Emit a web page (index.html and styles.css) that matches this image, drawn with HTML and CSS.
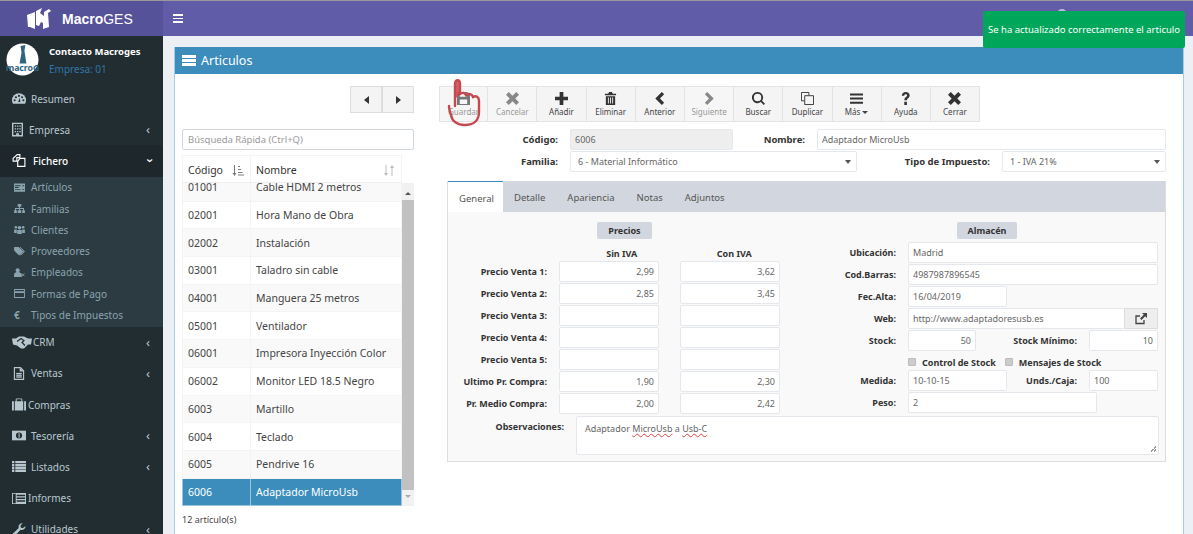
FILE: index.html
```html
<!DOCTYPE html>
<html lang="es">
<head>
    <title>MacroGES - Articulos</title>
    <meta charset="UTF-8">
    <link rel="stylesheet" href="styles.css">
</head>
<body>
    <div class="top-line"></div>
    <header class="topbar">
        <div class="brand">
            <svg class="brand-logo" viewBox="0 0 24 22"><path d="M0 7 L8 4 L8 21 L3 19 L1 19 Z M9 3 L15 0 L13 5 L17 8 L17 4 L22 1 L24 3 L21 5 L22 19 L16 21 L16 15 L14 14 L12 18 L9 17 Z" fill="#fff"/></svg>
            <span class="brand-name"><b>Macro</b>GES</span>
        </div>
        <div class="hamburger"><i></i><i></i><i></i></div>
        <div class="top-avatar"></div>
    </header>

    <div class="toast">Se ha actualizado correctamente el articulo</div>

    <div class="layout">
        <aside class="sidebar">
            <div class="user-panel">
                <div class="avatar">
                    <svg viewBox="0 0 34 34"><circle cx="17" cy="17" r="16.5" fill="#fff"/><path d="M15 3 L20 2 L19 8 L21 21 L14 21 L16 10 Z" fill="#2f6380"/><text x="17" y="29" text-anchor="middle" class="avatar-text">macroG</text></svg>
                </div>
                <div class="user-info">
                    <div class="user-name">Contacto Macroges</div>
                    <div class="user-company">Empresa: 01</div>
                </div>
            </div>
            <nav>
                <a class="nav-item"><svg class="nav-icon" viewBox="0 0 16 12"><path d="M8 0a8 8 0 0 0-8 8c0 1.500.4 2.800 1 4h14c.6-1.200 1-2.500 1-4a8 8 0 0 0-8-8z" fill="#b8c7ce"/><g fill="#222d32"><circle cx="3" cy="8" r="1.200"/><circle cx="4.500" cy="4.500" r="1.200"/><circle cx="8" cy="3" r="1.200"/><circle cx="11.500" cy="4.500" r="1.200"/><circle cx="13" cy="8" r="1.200"/><path d="M7 10l2-5 .5 5z"/></g></svg>Resumen</a>
                <a class="nav-item has-sub"><svg class="nav-icon building" viewBox="0 0 12 15"><path d="M0 0h12v15H0z M1.500 1.500v12h3v-2h3v2h3v-12z" fill="#b8c7ce" fill-rule="evenodd"/><path d="M3 3h1.500v1.500H3zM5.500 3H7v1.500H5.500zM8 3h1.500v1.500H8zM3 6h1.500v1.500H3zM5.500 6H7v1.500H5.500zM8 6h1.500v1.500H8zM3 9h1.500v1.500H3zM5.500 9H7v1.500H5.500zM8 9h1.500v1.500H8z" fill="#b8c7ce"/></svg>Empresa<span class="caret">&#8249;</span></a>
                <a class="nav-item active has-sub"><svg class="nav-icon" viewBox="0 0 15 15"><path d="M5.500.7h3v3.500h-3.500v4H.7V5z M8.500 5h5.800v9.300H6V8.500z" fill="none" stroke="#fff" stroke-width="1.300"/></svg>Fichero<span class="caret open">&#8249;</span></a>
                <div class="submenu">
                    <a class="sub-item"><svg class="sub-icon" viewBox="0 0 12 9"><path d="M0 0h12v9H0z M1 2v1h6V2z M1 4v1h4V4z M1 6v1h6V6z M9 2v1h2V2z M9 6v1h2V6z" fill="#8aa4af" fill-rule="evenodd"/></svg>Artículos</a>
                    <a class="sub-item"><svg class="sub-icon" viewBox="0 0 12 10"><path d="M4 0h4v3H6.500v1.500H11V7h1v3H9V7h1V5.500H6.500V7H8v3H4V7h1.500V5.500H2V7h1v3H0V7h1V4.500h4.500V3H4z" fill="#8aa4af"/></svg>Familias</a>
                    <a class="sub-item"><svg class="sub-icon" viewBox="0 0 12 10"><circle cx="6" cy="3" r="2" fill="#8aa4af"/><circle cx="2" cy="2.500" r="1.500" fill="#8aa4af"/><circle cx="10" cy="2.500" r="1.500" fill="#8aa4af"/><path d="M0 5h3v4H0zM9 5h3v4H9zM3.500 5.500h5V10h-5z" fill="#8aa4af"/></svg>Clientes</a>
                    <a class="sub-item"><svg class="sub-icon" viewBox="0 0 12 10"><path d="M0 0h5l5 5-4.500 4.500L0 4z M7 0l5 5-4.500 4.500-.8-.8L10.500 5 6 0z" fill="#8aa4af"/></svg>Proveedores</a>
                    <a class="sub-item"><svg class="sub-icon" viewBox="0 0 12 10"><circle cx="4" cy="2.500" r="2.300" fill="#8aa4af"/><path d="M0 10V7l2-2h4l2 2v3zM8.500 6l3 3M11.500 6l-3 3" fill="#8aa4af" stroke="#8aa4af"/></svg>Empleados</a>
                    <a class="sub-item"><svg class="sub-icon" viewBox="0 0 12 10"><path d="M0 0h12v10H0z M1 1v1.500h10V1z M1 4.500V9h10V4.500z" fill="#8aa4af" fill-rule="evenodd"/></svg>Formas de Pago</a>
                    <a class="sub-item"><span class="sub-glyph">€</span>Tipos de Impuestos</a>
                </div>
                <a class="nav-item has-sub tight"><svg class="nav-icon wide" viewBox="0 0 20 12"><path d="M0 2h4l3-2h5l4 2h4l-1 6h-3l-4 4H9L5 9 1 8z" fill="#b8c7ce"/><path d="M5 5l4-3 3 2-2 2 3 3" fill="none" stroke="#222d32" stroke-width="1.200"/></svg>CRM<span class="caret">&#8249;</span></a>
                <a class="nav-item has-sub"><svg class="nav-icon" viewBox="0 0 12 15"><path d="M.7.7h7l3.600 3.600v10H.7z" fill="none" stroke="#b8c7ce" stroke-width="1.300"/><path d="M7 1v4h4M3 7h6v1H3zM3 9h6v1H3zM3 11h6v1H3z" fill="#b8c7ce" stroke="#b8c7ce" stroke-width=".4"/></svg>Ventas<span class="caret">&#8249;</span></a>
                <a class="nav-item compact"><svg class="nav-icon" viewBox="0 0 15 13"><path d="M0 3h2v10H0zM3 3h1V1a1 1 0 0 1 1-1h5a1 1 0 0 1 1 1v2h1v10H3zM5 3h5V1H5zM13 3h2v10h-2z" fill="#b8c7ce" fill-rule="evenodd"/></svg>Compras</a>
                <a class="nav-item has-sub"><svg class="nav-icon" viewBox="0 0 16 11"><path d="M0 0h16v11H0z" fill="#b8c7ce"/><circle cx="8" cy="5.500" r="3.500" fill="#222d32"/><path d="M7.500 3h1.200v5H7.500z" fill="#b8c7ce"/></svg>Tesorería<span class="caret">&#8249;</span></a>
                <a class="nav-item has-sub"><svg class="nav-icon" viewBox="0 0 15 12"><path d="M0 0h2.500v2.500H0zM3.500 0H15v2.500H3.500zM0 3.200h2.500v2.500H0zM3.500 3.200H15v2.500H3.500zM0 6.400h2.500v2.500H0zM3.500 6.400H15v2.500H3.500zM0 9.500h2.500V12H0zM3.500 9.500H15V12H3.500z" fill="#b8c7ce"/></svg>Listados<span class="caret">&#8249;</span></a>
                <a class="nav-item compact"><svg class="nav-icon" viewBox="0 0 15 12"><path d="M0 0h15v12H0z M1 1v10h3V1z M5 2v1.500h9V2z M5 5v1.500h9V5z M5 8v1.500h9V8z" fill="#b8c7ce" fill-rule="evenodd"/></svg>Informes</a>
                <a class="nav-item has-sub"><svg class="nav-icon" viewBox="0 0 14 14"><path d="M14 3.500a4 4 0 0 1-5.300 3.800L2.800 13.500a1.500 1.500 0 0 1-2.200-2.200l6.100-6A4 4 0 0 1 11 .2L8.500 2.700l.5 2.300 2.300.5 2.500-2z" fill="#b8c7ce"/></svg>Utilidades<span class="caret">&#8249;</span></a>
            </nav>
        </aside>

        <main class="content">
            <section class="box">
                <div class="box-header">
                    <svg class="box-icon" viewBox="0 0 14 11"><path d="M0 0h14v3H0zM0 4h14v3H0zM0 8h14v3H0z" fill="#fff"/></svg>
                    <span>Articulos</span>
                </div>
                <div class="box-body">
                    <div class="list-col">
                        <div class="pager">
                            <button class="pager-btn"><i class="arrow-left"></i></button>
                            <button class="pager-btn"><i class="arrow-right"></i></button>
                        </div>
                        <input class="search" placeholder="Búsqueda Rápida (Ctrl+Q)">
                        <div class="list-head">
                            <div class="th th-code">Código
                                <svg class="sort-icon" viewBox="0 0 12 11"><path d="M2 0h1v8h1.500l-2 3-2-3H2zM6 1h2v1H6zM6 4h3v1H6zM6 7h4.500v1H6zM6 9.500h6v1H6z" fill="#777"/></svg>
                            </div>
                            <div class="th th-name">Nombre
                                <svg class="sort-icon faint" viewBox="0 0 12 11"><path d="M2.500 0h1v8H5l-2 3-2-3h1.500zM8.500 11h1V3H11L9 0 7 3h1.500z" fill="#bbb"/></svg>
                            </div>
                        </div>
                        <div class="list-wrap">
                            <div class="list-scroll">
                                <table class="list">
                                    <tr><td>01001</td><td>Cable HDMI 2 metros</td></tr>
                                    <tr><td>02001</td><td>Hora Mano de Obra</td></tr>
                                    <tr><td>02002</td><td>Instalación</td></tr>
                                    <tr><td>03001</td><td>Taladro sin cable</td></tr>
                                    <tr><td>04001</td><td>Manguera 25 metros</td></tr>
                                    <tr><td>05001</td><td>Ventilador</td></tr>
                                    <tr><td>06001</td><td>Impresora Inyección Color</td></tr>
                                    <tr><td>06002</td><td>Monitor LED 18.5 Negro</td></tr>
                                    <tr><td>6003</td><td>Martillo</td></tr>
                                    <tr><td>6004</td><td>Teclado</td></tr>
                                    <tr><td>6005</td><td>Pendrive 16</td></tr>
                                    <tr class="selected"><td>6006</td><td>Adaptador MicroUsb</td></tr>
                                </table>
                            </div>
                            <div class="scrollbar">
                                <i class="scroll-up"></i>
                                <div class="scroll-thumb"></div>
                                <i class="scroll-down"></i>
                            </div>
                        </div>
                        <div class="list-count">12 artículo(s)</div>
                    </div>

                    <div class="detail-col">
                        <div class="toolbar">
                            <button class="tool off"><svg viewBox="0 0 14 14"><path d="M0 0h11l3 3v11H0zM3 1v4h7V1zM3 8v5h8V8z" fill="#777" fill-rule="evenodd"/></svg>Guardar</button>
                            <button class="tool off"><svg viewBox="0 0 14 14"><path d="M2 5L0 3l3-3 4 4 4-4 3 3-4 4 4 4-3 3-4-4-4 4-3-3 4-4z" fill="#888"/></svg>Cancelar</button>
                            <button class="tool"><svg viewBox="0 0 14 14"><path d="M5 0h4v5h5v4H9v5H5V9H0V5h5z" fill="#333"/></svg>Añadir</button>
                            <button class="tool"><svg viewBox="0 0 14 14"><path d="M1 2h3.500l1-2h3l1 2H13v1.500H1zM2 4.500h10V14H2zM4.200 6v6.500h1V6zM6.500 6v6.500h1V6zM8.800 6v6.500h1V6z" fill="#333" fill-rule="evenodd"/></svg>Eliminar</button>
                            <button class="tool"><svg viewBox="0 0 14 14"><path d="M9.500 0L12 2.500 7.500 7l4.500 4.500L9.500 14l-7-7z" fill="#333"/></svg>Anterior</button>
                            <button class="tool off"><svg viewBox="0 0 14 14"><path d="M4.500 0L2 2.500 6.500 7 2 11.500 4.500 14l7-7z" fill="#888"/></svg>Siguiente</button>
                            <button class="tool"><svg viewBox="0 0 14 14"><path d="M6 0a6 6 0 0 1 4.800 9.500L14 12.600 12.600 14l-3.100-3.200A6 6 0 1 1 6 0zm0 2a4 4 0 1 0 0 8 4 4 0 0 0 0-8z" fill="#333"/></svg>Buscar</button>
                            <button class="tool"><svg viewBox="0 0 14 14"><path d="M.5.500h8v3M.5.500v9h3M4 4h9.500v9.500H4z" fill="none" stroke="#333"/></svg>Duplicar</button>
                            <button class="tool"><svg viewBox="0 0 14 14"><path d="M0 1.500h14v2.200H0zM0 6h14v2.200H0zM0 10.500h14v2.200H0z" fill="#333"/></svg><span>Más<i class="mini-caret"></i></span></button>
                            <button class="tool"><svg viewBox="0 0 14 14"><path d="M3 4c0-2.500 2-4 4.300-4C9.600 0 11.500 1.500 11.500 3.800c0 2.800-3 3-3 5.200H5.700c0-3.500 3-3.600 3-5.200 0-.8-.6-1.300-1.500-1.300-.9 0-1.500.6-1.600 1.500zM5.700 10.500h2.800V14H5.700z" fill="#333"/></svg>Ayuda</button>
                            <button class="tool"><svg viewBox="0 0 14 14"><path d="M2 5L0 3l3-3 4 4 4-4 3 3-4 4 4 4-3 3-4-4-4 4-3-3 4-4z" fill="#333"/></svg>Cerrar</button>
                        </div>

                        <div class="head-form">
                            <div class="head-row">
                                <label class="head-label">Código:</label>
                                <input class="field code readonly" value="6006" readonly>
                                <label class="head-label short">Nombre:</label>
                                <input class="field grow" value="Adaptador MicroUsb">
                            </div>
                            <div class="head-row">
                                <label class="head-label">Familia:</label>
                                <div class="field fake-select family">6 - Material Informático</div>
                                <label class="head-label tax">Tipo de Impuesto:</label>
                                <div class="field fake-select grow">1 - IVA 21%</div>
                            </div>
                        </div>

                        <div class="tabs">
                            <div class="tab-bar">
                                <a class="tab active">General</a>
                                <a class="tab">Detalle</a>
                                <a class="tab">Apariencia</a>
                                <a class="tab">Notas</a>
                                <a class="tab">Adjuntos</a>
                            </div>
                            <div class="tab-body">
                                <div class="tab-columns">
                                    <div class="prices">
                                        <div class="badge-row"><span class="badge precios">Precios</span></div>
                                        <div class="price-head"><span>Sin IVA</span><span>Con IVA</span></div>
                                        <div class="price-row"><label>Precio Venta 1:</label><input class="field num" value="2,99"><input class="field num" value="3,62"></div>
                                        <div class="price-row"><label>Precio Venta 2:</label><input class="field num" value="2,85"><input class="field num" value="3,45"></div>
                                        <div class="price-row"><label>Precio Venta 3:</label><input class="field num"><input class="field num"></div>
                                        <div class="price-row"><label>Precio Venta 4:</label><input class="field num"><input class="field num"></div>
                                        <div class="price-row"><label>Precio Venta 5:</label><input class="field num"><input class="field num"></div>
                                        <div class="price-row"><label>Ultimo Pr. Compra:</label><input class="field num" value="1,90"><input class="field num" value="2,30"></div>
                                        <div class="price-row"><label>Pr. Medio Compra:</label><input class="field num" value="2,00"><input class="field num" value="2,42"></div>
                                    </div>
                                    <div class="stock">
                                        <div class="badge-row"><span class="badge almacen">Almacén</span></div>
                                        <div class="stock-row"><label>Ubicación:</label><input class="field full" value="Madrid"></div>
                                        <div class="stock-row"><label>Cod.Barras:</label><input class="field full" value="4987987896545"></div>
                                        <div class="stock-row"><label>Fec.Alta:</label><input class="field mid" value="16/04/2019"></div>
                                        <div class="stock-row"><label>Web:</label><input class="field web" value="http://www.adaptadoresusb.es"><button class="web-btn"><svg viewBox="0 0 12 12"><path d="M9 7v3.500H1V3h4" fill="none" stroke="#444" stroke-width="1.300"/><path d="M7 0h5v5l-1.800-1.800L6.500 7 5 5.500l3.800-3.700z" fill="#444"/></svg></button></div>
                                        <div class="stock-row"><label>Stock:</label><input class="field small num" value="50"><label class="side-label">Stock Mínimo:</label><input class="field side num" value="10"></div>
                                        <div class="check-row"><i class="check"></i><span class="check-one">Control de Stock</span><i class="check"></i><span>Mensajes de Stock</span></div>
                                        <div class="stock-row"><label>Medida:</label><input class="field mid" value="10-10-15"><label class="side-label after-mid">Unds./Caja:</label><input class="field side" value="100"></div>
                                        <div class="stock-row"><label>Peso:</label><input class="field long" value="2"></div>
                                    </div>
                                </div>
                                <div class="notes-row">
                                    <label>Observaciones:</label>
                                    <div class="field notes">Adaptador <u>MicroUsb</u> a <u>Usb-C</u><i class="grip"></i></div>
                                </div>
                            </div>
                        </div>
                    </div>
                </div>
            </section>
        </main>
    </div>

    <svg class="hand" viewBox="0 0 38 48"><path d="M9 27 L9 5 C9 0 14 0 14 5 L14 15 C17 13 19 14 20 16 C23 14 26 15 27 18 C30 16 33 18 33 22 L33 33 C33 42 27 46 19 46 C11 46 6 42 5 36 C4 33 3 30 3 27" fill="none" stroke="#c6494f" stroke-width="2.400" stroke-linecap="round"/><path d="M9 5 C9 0 14 0 14 5 L14 15 L9 20 Z" fill="#c6494f" fill-opacity=".85"/></svg>
</body>
</html>
```
FILE: styles.css
```css
* {
    box-sizing: border-box;
}

html, body {
    height: 534px;
    overflow: hidden;
}

body {
    margin: 0;
    font-family: "Noto Sans", Arial, sans-serif;
    font-size: 10px;
    color: #333;
    background: #ecf0f5;
}

.top-line {
    height: 1px;
    background: #999;
}

/* top bar */
.topbar {
    height: 35px;
    display: flex;
    align-items: center;
    background: #605ca8;
    color: #fff;
}

.brand {
    width: 163px;
    height: 100%;
    display: flex;
    align-items: center;
    padding-left: 27px;
    background: #555299;
}

.brand-logo {
    width: 24px;
    height: 22px;
    margin-right: 11px;
}

.brand-name {
    font-family: "Liberation Sans", Arial, sans-serif;
    font-size: 14px;
}

.hamburger {
    margin-left: 10px;
    width: 10px;
    display: flex;
    flex-direction: column;
    gap: 2px;
}

.hamburger i {
    height: 1.500px;
    background: #fff;
}

.top-avatar {
    position: absolute;
    left: 1057px;
    top: 9px;
    width: 10px;
    height: 10px;
    border-radius: 50%;
    background: #b9b7d8;
}

.toast {
    position: absolute;
    left: 983px;
    top: 11px;
    width: 202px;
    height: 37px;
    padding-top: 12px;
    text-align: center;
    font-size: 9.500px;
    color: #fff;
    background: #00a65a;
    border-radius: 2px;
}

.layout {
    display: flex;
    height: 498px;
}

/* sidebar */
.sidebar {
    width: 163px;
    flex-shrink: 0;
    background: #222d32;
    color: #b8c7ce;
}

.user-panel {
    height: 47px;
    display: flex;
    padding: 7px 0 0 6px;
}

.avatar {
    width: 33px;
    height: 33px;
}

.avatar svg {
    width: 33px;
    height: 33px;
}

.avatar-text {
    font-size: 9px;
    font-weight: 700;
    fill: #2f6380;
}

.user-info {
    margin-left: 10px;
}

.user-name {
    margin-top: 2px;
    color: #fff;
    font-weight: 700;
    font-size: 9.500px;
}

.user-company {
    margin-top: 4px;
    color: #2f75a8;
    font-size: 10px;
}

.nav-item {
    height: 31.200px;
    display: flex;
    align-items: center;
    padding-left: 12px;
    font-size: 10px;
    white-space: nowrap;
}

.nav-icon {
    width: 14px;
    height: 13px;
    margin-right: 5px;
    flex-shrink: 0;
}

.nav-icon.building {
    width: 11px;
    height: 15px;
    margin-right: 6px;
}

.nav-icon.wide {
    width: 20px;
    margin-right: 1px;
}

.nav-item.compact .nav-icon {
    margin-right: 2px;
}

.nav-item.active {
    color: #fff;
    background: #1e282c;
    font-weight: 500;
}

.nav-item.active .nav-icon {
    margin-right: 7px;
}

.caret {
    margin-left: auto;
    margin-right: 13px;
    font-size: 13px;
    line-height: 1;
}

.caret.open {
    transform: rotate(-90deg);
}

.submenu {
    height: 150px;
    padding-top: 0;
    background: #2c3b41;
    color: #8aa4af;
}

.sub-item {
    height: 21.300px;
    display: flex;
    align-items: center;
    padding-left: 14px;
    font-size: 10px;
}

.sub-icon {
    width: 11px;
    height: 9px;
    margin-right: 6px;
}

.sub-glyph {
    width: 11px;
    margin-right: 6px;
    font-weight: 700;
}

/* box */
.content {
    flex: 1;
    padding: 11px 9px 0 11px;
}

.box {
    height: 500px;
    background: #fff;
    border-left: 1px solid #a5cde3;
    border-right: 1px solid #a5cde3;
}

.box-header {
    height: 27px;
    display: flex;
    align-items: center;
    padding-left: 7px;
    background: #3c8dbc;
    color: #fff;
    font-size: 12.500px;
}

.box-icon {
    width: 14px;
    height: 11px;
    margin-right: 5px;
}

.box-body {
    display: flex;
    padding: 12px 0 0 7px;
}

/* list column */
.list-col {
    width: 232px;
    flex-shrink: 0;
}

.pager {
    display: flex;
    justify-content: flex-end;
    margin-bottom: 16px;
}

.pager-btn {
    width: 32px;
    height: 27px;
    padding: 0;
    display: flex;
    align-items: center;
    justify-content: center;
    background: #f4f4f4;
    border: 1px solid #ddd;
}

.arrow-left {
    border: 4px solid transparent;
    border-left: 0;
    border-right: 5px solid #333;
}

.arrow-right {
    border: 4px solid transparent;
    border-right: 0;
    border-left: 5px solid #333;
}

.search {
    display: block;
    width: 100%;
    height: 21px;
    padding: 0 5px;
    font: inherit;
    font-size: 9.500px;
    border: 1px solid #d2d6de;
    border-radius: 2px;
    outline: none;
}

.search::placeholder {
    color: #999;
}

.list-head {
    display: flex;
    width: 220px;
    height: 28px;
    margin-top: 5px;
    border: 1px solid #f4f4f4;
    border-bottom: 1px solid #eee;
    font-size: 10.500px;
}

.th {
    display: flex;
    align-items: center;
    justify-content: space-between;
    padding: 2px 6px 0 5px;
}

.th-code {
    width: 68px;
    border-right: 1px solid #f4f4f4;
}

.th-name {
    flex: 1;
}

.sort-icon {
    width: 12px;
    height: 11px;
}

.list-wrap {
    display: flex;
    height: 323px;
}

.list-scroll {
    width: 220px;
    overflow: hidden;
}

.list {
    width: 100%;
    margin-top: -10px;
    border-collapse: collapse;
    table-layout: fixed;
    font-size: 10.500px;
}

.list td {
    height: 27.700px;
    padding: 0 5px;
    color: #444;
    border: 1px solid #f4f4f4;
    white-space: nowrap;
}

.list td:first-child {
    width: 68px;
}

.list tr:nth-child(odd) {
    background: #f9f9f9;
}

.list tr.selected {
    background: #3c8dbc;
}

.list tr.selected td {
    color: #fff;
    border-color: #9cc6de;
}

.scrollbar {
    width: 12px;
    display: flex;
    flex-direction: column;
    background: #f1f1f1;
}

.scroll-thumb {
    flex: 1;
    margin: 5px 0 5px;
    background: #c1c1c1;
}

.scroll-up, .scroll-down {
    height: 6px;
    margin: 6px auto 0;
    border: 3px solid transparent;
    border-top: 0;
    border-bottom: 3px solid #555;
}

.scroll-down {
    margin: 0 auto 5px;
    border: 3px solid transparent;
    border-bottom: 0;
    border-top: 3px solid #aaa;
}

.list-count {
    margin-top: 7px;
    font-size: 9px;
    color: #444;
}

/* detail column */
.detail-col {
    width: 727px;
    margin-left: 25px;
}

.toolbar {
    display: flex;
    width: 541px;
    height: 36px;
}

.tool {
    width: 49.200px;
    padding: 3px 0 0;
    display: flex;
    flex-direction: column;
    align-items: center;
    font: inherit;
    font-size: 8px;
    color: #444;
    background: #f4f4f4;
    border: 1px solid #e3e3e3;
    border-left: 0;
}

.tool:first-child {
    border-left: 1px solid #e3e3e3;
}

.tool.off {
    color: #999;
    background: #f6f6f6;
}

.tool svg {
    width: 13px;
    height: 13px;
    margin-top: 2px;
    margin-bottom: 1px;
}

.mini-caret {
    display: inline-block;
    margin-left: 2px;
    vertical-align: middle;
    border: 3px solid transparent;
    border-bottom: 0;
    border-top: 3px solid #444;
}

.field {
    height: 21px;
    padding: 0 4px;
    font: inherit;
    font-size: 9px;
    line-height: 19px;
    color: #666;
    background: #fff;
    border: 1px solid #e4e7ec;
    border-radius: 2px;
    outline: none;
}

.num {
    text-align: right;
}

.head-form {
    margin-top: 7px;
}

.head-row {
    display: flex;
    height: 22px;
    padding-left: 8px;
    width: 727px;
}

.head-label {
    width: 111px;
    margin-right: 12px;
    text-align: right;
    font-weight: 700;
    font-size: 9.500px;
    line-height: 21px;
}

.head-label.short {
    width: 72px;
}

.head-label.tax {
    width: 133px;
}

.code {
    width: 163px;
}

.readonly {
    background: #eee;
}

.family {
    width: 287px;
    padding-left: 7px;
}

.grow {
    width: 349px;
    flex-shrink: 0;
}

.head-row .fake-select.grow {
    width: 164px;
    padding-left: 7px;
}

.fake-select {
    position: relative;
}

.fake-select::after {
    content: "";
    position: absolute;
    right: 5px;
    top: 8px;
    border: 3px solid transparent;
    border-bottom: 0;
    border-top: 4px solid #555;
}

.tabs {
    width: 719px;
    height: 281px;
    margin: 8px 0 0 8px;
    background: #f9f9f9;
    border: 1px solid #ddd;
    border-top: 0;
}

.tab-bar {
    display: flex;
    height: 31px;
    background: #d2d6de;
    font-size: 9.500px;
    color: #555;
}

.tab {
    padding: 10px 11px 0;
}

.tab.active {
    width: 55px;
    background: #fff;
    border-top: 1px solid #3c8dbc;
}

.tab-body {
    padding-top: 10px;
}

.tab-columns {
    display: flex;
}

.badge-row {
    height: 17px;
}

.badge {
    display: inline-block;
    height: 17px;
    line-height: 17px;
    text-align: center;
    font-weight: 700;
    font-size: 9px;
    background: #d2d6de;
    border-radius: 2px;
}

.precios {
    width: 55px;
    margin-left: 149px;
}

.almacen {
    width: 60px;
    margin-left: 156px;
}

.prices {
    width: 353px;
}

.price-head {
    display: flex;
    height: 22px;
    padding: 8px 0 0 128px;
    font-weight: 700;
    font-size: 9px;
}

.price-head span {
    width: 100px;
    margin-right: 21px;
    text-align: center;
}

.price-row {
    display: flex;
    height: 22px;
}

.price-row label, .stock-row label, .notes-row label {
    text-align: right;
    font-weight: 700;
    font-size: 9px;
    line-height: 21px;
}

.price-row label {
    width: 116px;
    margin-right: 12px;
}

.price-row .field {
    width: 100px;
    margin-right: 21px;
}

.stock {
    flex: 1;
    padding-top: 3px;
}

.stock .badge-row {
    height: 17px;
    margin-top: -3px;
    margin-bottom: 3px;
}

.stock-row {
    display: flex;
    height: 22px;
}

.stock-row label {
    width: 95px;
    margin-right: 12px;
}

.stock-row .side-label {
    width: 101px;
}

.stock-row .after-mid {
    width: 70px;
}

.full {
    width: 250px;
}

.mid {
    width: 99px;
}

.web {
    width: 216px;
    border-right: 0;
}

.web-btn {
    width: 34px;
    height: 21px;
    padding: 0;
    background: #eee;
    border: 1px solid #ddd;
}

.web-btn svg {
    width: 12px;
    height: 12px;
    display: block;
    margin: auto;
}

.small {
    width: 68px;
}

.side {
    width: 69px;
}

.long {
    width: 189px;
}

.check-row {
    height: 18px;
    display: flex;
    align-items: center;
    padding: 2px 0 0 107px;
    font-weight: 700;
    font-size: 9px;
}

.check {
    width: 8px;
    height: 8px;
    margin-right: 6px;
    background: #ccc;
    border: 1px solid #bbb;
    border-radius: 1px;
}

.check-one {
    margin-right: 9px;
}

.notes-row {
    display: flex;
    margin-top: 1px;
}

.notes-row label {
    width: 116px;
    margin-right: 12px;
}

.notes {
    position: relative;
    width: 583px;
    height: 39px;
    padding: 6px 8px;
    line-height: 12px;
}

.notes u {
    text-decoration: underline wavy #e04040 1px;
}

.grip {
    position: absolute;
    right: 2px;
    bottom: 2px;
    width: 6px;
    height: 6px;
    background: linear-gradient(135deg, transparent 50%, #999 50%, #999 60%, transparent 60%, transparent 75%, #999 75%, #999 85%, transparent 85%);
}

/* the pointer drawn over the save button */
.hand {
    position: absolute;
    left: 446px;
    top: 79px;
    width: 38px;
    height: 48px;
}
```
